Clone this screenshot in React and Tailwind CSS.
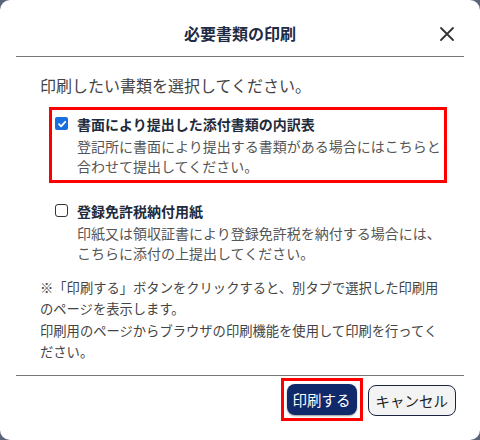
const FONT = { fontFamily: '"Noto Sans CJK JP", "Noto Sans", sans-serif' }

const items = [
  {
    label: '書面により提出した添付書類の内訳表',
    desc: ['登記所に書面により提出する書類がある場合にはこちらと', '合わせて提出してください。'],
    checked: true,
  },
  {
    label: '登録免許税納付用紙',
    desc: ['印紙又は領収証書により登録免許税を納付する場合には、', 'こちらに添付の上提出してください。'],
    checked: false,
  },
]

const CheckItem = ({ item }) => (
  <div className="flex gap-[9px]">
    <div className="pt-[4px]">
      {item.checked ? (
        <div className="w-[13px] h-[13px] rounded-[2px] bg-[#1a6fe0] flex items-center justify-center">
          <svg width="10" height="10" viewBox="0 0 10 10">
            <path d="M2 5.2 L4.1 7.3 L8.2 2.8" stroke="white" strokeWidth="1.8" fill="none" strokeLinecap="round" strokeLinejoin="round" />
          </svg>
        </div>
      ) : (
        <div className="w-[13px] h-[13px] rounded-[3px] border border-[#333] bg-white" />
      )}
    </div>
    <div>
      <div className="text-[14px] leading-[22px] font-bold text-[#222a3a] whitespace-nowrap">{item.label}</div>
      <div className="text-[14px] leading-[20px] text-[#555] mt-[1px]">
        {item.desc.map((d) => (
          <div key={d} className="whitespace-nowrap">{d}</div>
        ))}
      </div>
    </div>
  </div>
)

export default function App() {
  return (
    <div className="w-[480px] h-[440px] bg-[#5b6478]" style={FONT}>
      <div className="w-full h-full bg-white rounded-[10px] flex flex-col px-4">
        <div className="h-[57px] relative flex items-center justify-center border-b border-[#777] pt-[9px]">
          <h2 className="text-[16px] font-bold text-[#1f2a44]">必要書類の印刷</h2>
          <button className="absolute right-[9px] top-[26px]">
            <svg width="16" height="16" viewBox="0 0 16 16">
              <path d="M2 2 L14 14 M14 2 L2 14" stroke="#333" strokeWidth="1.8" strokeLinecap="round" />
            </svg>
          </button>
        </div>

        <div className="px-6 pt-[16px] flex-1">
          <p className="text-[16px] leading-[24px] text-[#444]">印刷したい書類を選択してください。</p>

          <div className="mt-[10px] ml-[9px] w-[398px] border-[3px] border-[#ff0000] pl-[3px] pt-[3px] pb-[4px]">
            <CheckItem item={items[0]} />
          </div>

          <div className="mt-[17px] ml-[15px]">
            <CheckItem item={items[1]} />
          </div>

          <div className="mt-[14px] text-[13.3px] leading-[21.3px] text-[#444]">
            <p className="whitespace-nowrap">※「印刷する」ボタンをクリックすると、別タブで選択した印刷用</p>
            <p>のページを表示します。</p>
            <p className="whitespace-nowrap">印刷用のページからブラウザの印刷機能を使用して印刷を行ってく</p>
            <p>ださい。</p>
          </div>
        </div>

        <div className="border-t border-[#777] h-[65px] flex items-start justify-end gap-[5px] pt-[2px] pr-[8px]">
          <div className="border-[3px] border-[#ff0000] p-[3px]">
            <button className="h-[31px] px-[6px] rounded-[8px] bg-[#10296b] text-white text-[14.5px] shadow-[0_1px_2px_rgba(0,0,0,0.4)]">
              印刷する
            </button>
          </div>
          <button className="mt-[7px] h-[31px] px-[7px] rounded-[8px] bg-[#f3f3f3] border-[1.5px] border-[#1a2540] text-[#222] text-[14.5px]">
            キャンセル
          </button>
        </div>
      </div>
    </div>
  )
}
